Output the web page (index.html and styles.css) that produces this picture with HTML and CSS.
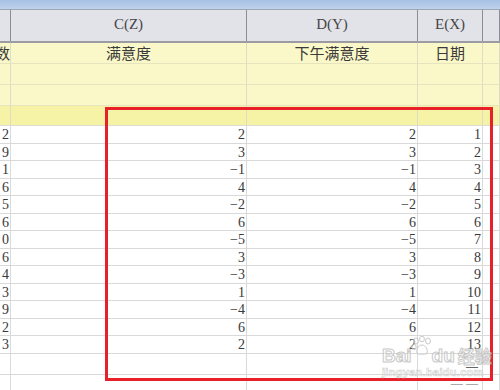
FILE: index.html
```html
<!DOCTYPE html>
<html>
<head>
<meta charset="utf-8">
<link rel="stylesheet" href="styles.css">
</head>
<body>
<div class="sheet">
  <div class="topbar"></div>
  <div class="row head">
    <div class="cell"></div>
    <div class="cell">C(Z)</div>
    <div class="cell">D(Y)</div>
    <div class="cell">E(X)</div>
    <div class="cell"></div>
  </div>
  <div class="row yel title">
    <div class="cell a">数</div>
    <div class="cell">满意度</div>
    <div class="cell">下午满意度</div>
    <div class="cell">日期</div>
    <div class="cell"></div>
  </div>
  <div class="row yel"><div class="cell"></div><div class="cell"></div><div class="cell"></div><div class="cell"></div><div class="cell"></div></div>
  <div class="row yel"><div class="cell"></div><div class="cell"></div><div class="cell"></div><div class="cell"></div><div class="cell"></div></div>
  <div class="row yel bright"><div class="cell"></div><div class="cell"></div><div class="cell"></div><div class="cell"></div><div class="cell"></div></div>

  <div class="row data"><div class="cell">2</div><div class="cell">2</div><div class="cell">2</div><div class="cell">1</div><div class="cell"></div></div>
  <div class="row data"><div class="cell">9</div><div class="cell">3</div><div class="cell">3</div><div class="cell">2</div><div class="cell"></div></div>
  <div class="row data"><div class="cell">1</div><div class="cell">−1</div><div class="cell">−1</div><div class="cell">3</div><div class="cell"></div></div>
  <div class="row data"><div class="cell">6</div><div class="cell">4</div><div class="cell">4</div><div class="cell">4</div><div class="cell"></div></div>
  <div class="row data"><div class="cell">5</div><div class="cell">−2</div><div class="cell">−2</div><div class="cell">5</div><div class="cell"></div></div>
  <div class="row data"><div class="cell">6</div><div class="cell">6</div><div class="cell">6</div><div class="cell">6</div><div class="cell"></div></div>
  <div class="row data"><div class="cell">0</div><div class="cell">−5</div><div class="cell">−5</div><div class="cell">7</div><div class="cell"></div></div>
  <div class="row data"><div class="cell">6</div><div class="cell">3</div><div class="cell">3</div><div class="cell">8</div><div class="cell"></div></div>
  <div class="row data"><div class="cell">4</div><div class="cell">−3</div><div class="cell">−3</div><div class="cell">9</div><div class="cell"></div></div>
  <div class="row data"><div class="cell">3</div><div class="cell">1</div><div class="cell">1</div><div class="cell">10</div><div class="cell"></div></div>
  <div class="row data"><div class="cell">9</div><div class="cell">−4</div><div class="cell">−4</div><div class="cell">11</div><div class="cell"></div></div>
  <div class="row data"><div class="cell">2</div><div class="cell">6</div><div class="cell">6</div><div class="cell">12</div><div class="cell"></div></div>
  <div class="row data"><div class="cell">3</div><div class="cell">2</div><div class="cell">2</div><div class="cell">13</div><div class="cell"></div></div>
  <div class="row data tall"><div class="cell"></div><div class="cell"></div><div class="cell"></div><div class="cell"><span class="dash">—</span></div><div class="cell"></div></div>
  <div class="row data"><div class="cell"></div><div class="cell"></div><div class="cell"></div><div class="cell"><span class="dash light">— —</span></div><div class="cell"></div></div>

  <div class="redbox"></div>

  <div class="watermark">
    <div class="brand">
      <span>Bai</span>
      <svg class="paw" width="22" height="20" viewBox="0 0 22 20">
        <g fill="rgba(255,255,255,0.7)" stroke="#bcbcbc" stroke-width="1">
          <ellipse cx="5" cy="5" rx="2.4" ry="3"/>
          <ellipse cx="11" cy="3" rx="2.4" ry="2.8"/>
          <ellipse cx="17" cy="5" rx="2.4" ry="3"/>
          <ellipse cx="3" cy="11" rx="2.2" ry="2.6"/>
          <path d="M11 9 C7 9 5 14 6 17 C7 19 10 18 11 18 C12 18 15 19 16 17 C17 14 15 9 11 9 Z"/>
        </g>
      </svg>
      <span>du</span>
      <span class="cn">经验</span>
    </div>
    <div class="url">jingyan.baidu.com</div>
  </div>
</div>
</body>
</html>
```
FILE: styles.css
```css
html, body {
  margin: 0;
  padding: 0;
  background: #ffffff;
}
.sheet {
  position: relative;
  width: 500px;
  height: 390px;
  overflow: hidden;
  font-family: "Liberation Serif", "Noto Sans CJK SC", serif;
  color: #333;
}
.topbar {
  height: 9px;
  background: linear-gradient(#a6c1e4, #bed2ec);
  border-bottom: 1px solid #9ca6b4;
}
.row {
  display: grid;
  grid-template-columns: 11px 236px 171px 65px 17px;
}
.cell {
  overflow: hidden;
  white-space: nowrap;
  box-sizing: border-box;
}
.head {
  height: 33px;
  background: #e2e2e9;
  border-bottom: 2px solid #9b9ba3;
  box-sizing: border-box;
}
.head .cell {
  border-right: 1.5px solid #8d8d95;
  display: flex;
  align-items: center;
  justify-content: center;
  font-size: 15px;
  color: #454545;
  padding-bottom: 2px;
}
.yel {
  height: 21px;
  background: #faf8c8;
  border-bottom: 1px solid #e6e4be;
  box-sizing: border-box;
}
.yel .cell {
  border-right: 1px solid #dedcc4;
}
.yel.bright {
  height: 20px;
  background: #f6f2a6;
  border-bottom: 1px solid #dcdcd0;
}
.title .cell {
  font-family: "Noto Sans CJK SC", sans-serif;
  font-size: 15px;
  line-height: 20px;
  text-align: center;
  color: #3a3a3a;
}
.title .cell.a {
  text-align: right;
  direction: rtl;
}
.data {
  height: 17.5px;
  border-bottom: 1px solid #d9d9d9;
  box-sizing: border-box;
}
.data.tall {
  height: 21.5px;
}
.data .cell {
  border-right: 1px solid #dadada;
  display: flex;
  align-items: flex-end;
  justify-content: flex-end;
  font-size: 14px;
  line-height: 14px;
  padding-right: 1px;
  padding-bottom: 0.5px;
  color: #3a3a3a;
}
.dash {
  font-family: "Liberation Sans", sans-serif;
  font-size: 12px;
  color: #666;
  margin-right: 3px;
}
.dash.light {
  color: #aaa;
}
.redbox {
  position: absolute;
  left: 105px;
  top: 107px;
  width: 388px;
  height: 274px;
  border: 3px solid #e8202a;
  box-sizing: border-box;
}
.watermark {
  position: absolute;
  left: 382px;
  top: 336px;
  opacity: 0.8;
}
.brand {
  display: flex;
  align-items: flex-end;
  font-family: "Liberation Sans", sans-serif;
  font-weight: bold;
  font-size: 19px;
  line-height: 19px;
  color: rgba(255, 255, 255, 0.6);
  -webkit-text-stroke: 1px #bcbcbc;
}
.paw {
  margin: 0 -1px 9px -1px;
}
.brand .cn {
  font-family: "Noto Sans CJK SC", sans-serif;
  font-size: 17px;
  margin-left: 3px;
}
.url {
  font-family: "Liberation Sans", sans-serif;
  font-weight: bold;
  font-size: 11px;
  line-height: 13px;
  margin-top: 1px;
  color: rgba(255, 255, 255, 0.6);
  -webkit-text-stroke: 0.6px #c4c4c4;
  letter-spacing: 0.3px;
}
```
